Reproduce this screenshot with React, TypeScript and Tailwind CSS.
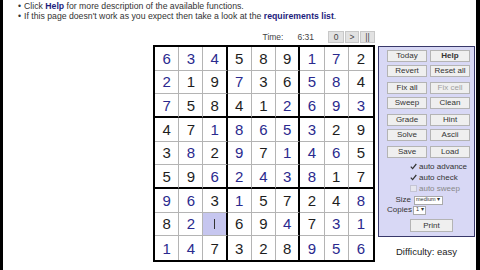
import React from 'react';

const rows = [
  '634589172',
  '219736584',
  '758412693',
  '471865329',
  '382971465',
  '596243817',
  '963157248',
  '82 694731',
  '147328956',
];

const colours = [
  'bbbkkkbbk',
  'bkkbkkbbk',
  'bkkkkbbbb',
  'kkbbbbbkk',
  'kbkbkbbbk',
  'kkbbbbbkk',
  'bbkbkkkkb',
  'kb-kkbkbb',
  'bbkkkkbbb',
];

function Btn({ label, bold, dim }: { label: string; bold?: boolean; dim?: boolean }) {
  return (
    <div
      className={
        'h-[12px] w-[40px] flex items-center justify-center border border-[#b4b4b4] bg-[#efefef] text-[8px] leading-none ' +
        (bold ? 'font-bold text-[#111] ' : '') +
        (dim ? 'text-[#a0a0a0]' : 'text-[#333]')
      }
    >
      {label}
    </div>
  );
}

function Check({ checked, label }: { checked: boolean; label: string }) {
  return (
    <div className="flex items-center h-[11px] pl-[23px] gap-[2px]">
      <span className={'w-[7px] h-[7px] flex items-center justify-center ' + (checked ? '' : 'bg-[#e6e6ee] border border-[#c4c4d4]')}>
        {checked && (
          <svg width="7" height="7" viewBox="0 0 7 7">
            <path d="M0.8 3.6 L2.6 5.6 L6.3 1" stroke="#333" strokeWidth="1.2" fill="none" />
          </svg>
        )}
      </span>
      <span className={'text-[8px] leading-none ' + (checked ? 'text-[#333]' : 'text-[#888]')}>{label}</span>
    </div>
  );
}

export default function App() {
  return (
    <div className="w-[480px] h-[270px] bg-white flex overflow-hidden font-['Liberation_Sans',Arial,sans-serif]">
      <div className="w-[3px] bg-black" />
      <div className="flex-1 flex flex-col">
        <ul className="pl-[15px] pt-px text-[8.7px] leading-[10px] text-[#333]">
          <li className="flex gap-[3px] whitespace-nowrap">
            <span>•</span>
            <span>
              Click <b className="text-[#1c1c7c]">Help</b> for more description of the available functions.
            </span>
          </li>
          <li className="flex gap-[3px] whitespace-nowrap">
            <span>•</span>
            <span>
              If this page doesn't work as you expect then take a look at the{' '}
              <b className="text-[#1c1c7c]">requirements list</b>.
            </span>
          </li>
        </ul>

        <div className="mt-[10px] w-[372px] h-[12px] flex items-center justify-end text-[8.5px] text-[#444]">
          <span className="mr-[14px]">Time:</span>
          <span className="mr-[14px]">6:31</span>
          <div className="flex h-[12px] gap-px">
            <div className="w-[16px] flex items-center justify-center bg-[#e2e2e2] border border-[#c8c8c8]">0</div>
            <div className="w-[14px] flex items-center justify-center bg-[#e2e2e2] border border-[#c8c8c8]">&gt;</div>
            <div className="w-[15px] flex items-center justify-center bg-[#e2e2e2] border border-[#c8c8c8]">||</div>
          </div>
        </div>

        <div className="mt-[2px] flex items-start">
          <div className="ml-[150px] w-[222px] h-[217px] border-2 border-black grid grid-cols-9 grid-rows-9">
            {rows.map((row, r) =>
              row.split('').map((d, c) => {
                const sel = colours[r][c] === '-';
                return (
                  <div
                    key={r + '-' + c}
                    className={
                      'flex items-center justify-center text-[15px] leading-none ' +
                      (c < 8 ? (c === 2 || c === 5 ? 'border-r-2 border-r-black ' : 'border-r border-r-[#b4b4b4] ') : '') +
                      (r < 8 ? (r === 2 || r === 5 ? 'border-b-2 border-b-black ' : 'border-b border-b-[#b4b4b4] ') : '') +
                      (sel ? 'bg-[#c6c6ef] ' : 'bg-white ') +
                      (colours[r][c] === 'b' ? 'text-[#2a2a8e]' : 'text-[#1e1e1e]')
                    }
                  >
                    {sel ? <span className="w-px h-[10px] bg-[#333]" /> : d}
                  </div>
                );
              })
            )}
          </div>

          <div className="ml-[3px] flex flex-col">
            <div className="mt-px w-[97px] h-[191px] border border-[#38386a] bg-[#d8d8f5] pt-[3px] pl-[8px] flex flex-col">
              <div className="grid grid-cols-[40px_40px] gap-x-[3px] gap-y-[3px]">
                <Btn label="Today" />
                <Btn label="Help" bold />
                <Btn label="Revert" />
                <Btn label="Reset all" />
              </div>
              <div className="mt-[5px] grid grid-cols-[40px_40px] gap-x-[3px] gap-y-[3px]">
                <Btn label="Fix all" />
                <Btn label="Fix cell" dim />
                <Btn label="Sweep" />
                <Btn label="Clean" />
              </div>
              <div className="mt-[5px] grid grid-cols-[40px_40px] gap-x-[3px] gap-y-[3px]">
                <Btn label="Grade" />
                <Btn label="Hint" />
                <Btn label="Solve" />
                <Btn label="Ascii" />
              </div>
              <div className="mt-[5px] grid grid-cols-[40px_40px] gap-x-[3px]">
                <Btn label="Save" />
                <Btn label="Load" />
              </div>
              <div className="mt-[3px] flex flex-col">
                <Check checked label="auto advance" />
                <Check checked label="auto check" />
                <Check checked={false} label="auto sweep" />
              </div>
              <div className="mt-px flex items-center h-[10px] text-[8px] text-[#333]">
                <span className="w-[24px] text-right">Size</span>
                <span className="ml-[3px] h-[9px] w-[29px] bg-white border border-[#aaa] text-[5.5px] leading-none flex items-center px-px whitespace-nowrap">
                  medium ▾
                </span>
              </div>
              <div className="flex items-center h-[10px] text-[8px] text-[#333]">
                <span className="w-[22px] text-right">Copies</span>
                <span className="ml-[4px] h-[9px] w-[13px] bg-white border border-[#aaa] text-[5.5px] leading-none flex items-center px-[2px] whitespace-nowrap">
                  1 ▾
                </span>
              </div>
              <div className="mt-[4px] ml-[23px] h-[13px] w-[43px] flex items-center justify-center border border-[#b4b4b4] bg-[#efefef] text-[8px] text-[#333]">
                Print
              </div>
            </div>
            <div className="mt-[8px] text-center text-[9.5px] text-[#222]">Difficulty: easy</div>
          </div>
        </div>
      </div>
      <div className="w-[4px] bg-black" />
    </div>
  );
}
